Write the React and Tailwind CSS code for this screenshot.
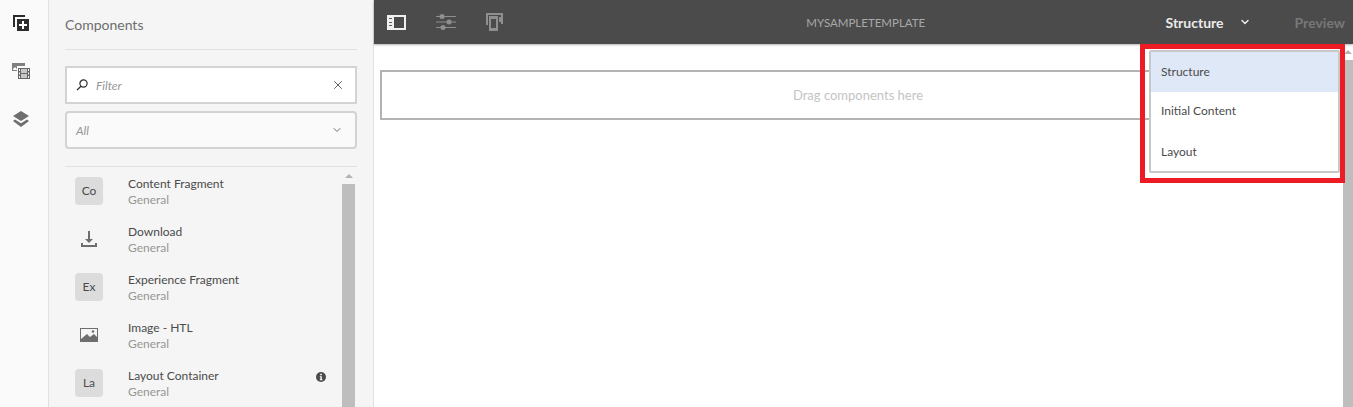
import { ChevronDown, X } from 'lucide-react'

const font = { fontFamily: 'Lato, "Noto Sans", sans-serif' }

function InsertIcon() {
  return (
    <svg width="16" height="16" viewBox="0 0 16 16">
      <path d="M0 0h12v2H2v10H0z" fill="#2c2c2c" />
      <path d="M4 4h12v12H4z" fill="#2c2c2c" />
      <path d="M9 6h2v3h3v2h-3v3H9v-3H6V9h3z" fill="#fff" />
    </svg>
  )
}

function AssetsIcon() {
  return (
    <svg width="18" height="16" viewBox="0 0 18 16">
      <path d="M0 0h13v3H5v5H0z" fill="#808080" />
      <path d="M1 6l2-2 2 2v1H1z" fill="#fff" />
      <path d="M6 5h12v11H6z" fill="#666666" />
      <path d="M9 6h6v4H9zM9 11h6v4H9z" fill="#c8c8c8" />
      <path d="M7 6h1v2H7zM7 9.500h1v2H7zM7 13h1v2H7zM16 6h1v2h-1zM16 9.500h1v2h-1zM16 13h1v2h-1z" fill="#fafafa" />
    </svg>
  )
}

function LayersIcon() {
  return (
    <svg width="16" height="17" viewBox="0 0 16 17">
      <path d="M8 0l8 5-8 5-8-5z" fill="#6e6e6e" />
      <path d="M2 8.500l6 3.800 6-3.800 2 1.500-8 6L0 10z" fill="#6e6e6e" />
    </svg>
  )
}

function TrayIcon() {
  return (
    <svg width="16" height="16" viewBox="0 0 16 16" fill="#6e6e6e">
      <path d="M7 0h2v8h3l-4 4-4-4h3z" />
      <path d="M0 12h2v2h12v-2h2v4H0z" />
    </svg>
  )
}

function ImageIcon() {
  return (
    <svg width="18" height="14" viewBox="0 0 18 14">
      <path d="M0 0h18v14H0z" fill="#6e6e6e" />
      <path d="M1 1h16v8l-3-3-4 3-3-3-6 5z" fill="#f5f5f5" />
      <circle cx="13" cy="3.500" r="1.200" fill="#6e6e6e" />
    </svg>
  )
}

function PanelIcon() {
  return (
    <svg width="19" height="15" viewBox="0 0 19 15">
      <path d="M0 0h19v15H0z" fill="#f0f0f0" />
      <path d="M7 2h10v11H7z" fill="#4b4b4b" />
      <path d="M2 3h3v1H2zM2 7h3v1H2zM2 10h3v1H2z" fill="#6b5560" />
    </svg>
  )
}

function SlidersIcon() {
  return (
    <svg width="20" height="16" viewBox="0 0 20 16" fill="#8f8f8f">
      <path d="M0 2h20v1H0zM0 7.500h20v1H0zM0 13h20v1H0z" />
      <circle cx="6" cy="2.500" r="2.500" />
      <circle cx="13" cy="8" r="2.500" />
      <circle cx="7" cy="13.500" r="2.500" />
    </svg>
  )
}

function DevicesIcon() {
  return (
    <svg width="18" height="18" viewBox="0 0 18 18">
      <path d="M0 0h17v11h-2V2H2v10H0z" fill="#8f8f8f" />
      <path d="M3 3h9v15H3z" fill="#8f8f8f" />
      <path d="M5 6h5v9H5z" fill="#4b4b4b" />
      <path d="M13 4h4v5h-4z" fill="#8f8f8f" />
    </svg>
  )
}

function LensIcon() {
  return (
    <svg width="12" height="12" viewBox="0 0 12 12" fill="none" stroke="#2c2c2c" strokeWidth="1.200">
      <circle cx="7.500" cy="4.500" r="3.600" />
      <path d="M5 7.200L1 11" />
    </svg>
  )
}

function InfoIcon() {
  return (
    <svg width="10" height="10" viewBox="0 0 10 10">
      <circle cx="5" cy="5" r="5" fill="#4b4b4b" />
      <path d="M4.200 1.800h1.600v1.500H4.200zM3.800 4.200h2v3h.6v1H3.800v-1h.6v-2h-.6z" fill="#fff" />
    </svg>
  )
}

const components = [
  { title: 'Content Fragment', badge: 'Co' },
  { title: 'Download', icon: <TrayIcon /> },
  { title: 'Experience Fragment', badge: 'Ex' },
  { title: 'Image - HTL', icon: <ImageIcon /> },
  { title: 'Layout Container', badge: 'La', info: true },
]

function ComponentRow({ item }) {
  return (
    <div className="flex h-12 shrink-0 items-start pl-[10px] pr-[16px]">
      <div className="flex h-7 w-7 shrink-0 items-center justify-center rounded-[4px] text-[12px] text-[#4b4b4b]">
        {item.badge
          ? <div className="flex h-7 w-7 items-center justify-center rounded-[4px] bg-[#dcdcdc]">{item.badge}</div>
          : item.icon}
      </div>
      <div className="ml-[25px] -mt-[1px] flex-1">
        <div className="text-[12px] leading-4 text-[#4b4b4b]">{item.title}</div>
        <div className="text-[12px] leading-4 text-[#969696]">General</div>
      </div>
      {item.info && <div className="mt-[3px]"><InfoIcon /></div>}
    </div>
  )
}

export default function App() {
  return (
    <div className="flex h-[407px] w-[1353px] overflow-hidden bg-white" style={font}>
      {/* Rail */}
      <div className="flex w-[49px] shrink-0 flex-col items-center gap-[32px] border-r border-[#e1e1e1] bg-[#fafafa] pr-[6px] pt-[15px]">
        <InsertIcon />
        <AssetsIcon />
        <LayersIcon />
      </div>

      {/* Components panel */}
      <div className="flex w-[325px] shrink-0 flex-col border-r border-[#e1e1e1] bg-[#f5f5f5] pl-[16px] pr-[16px]">
        <div className="flex h-[50px] shrink-0 items-center border-b border-[#e1e1e1] text-[14px] text-[#6e6e6e]">
          Components
        </div>
        <div className="mt-4 flex h-[38px] shrink-0 items-center border-2 border-[#d3d3d3] bg-white pl-[9px] pr-[10px]">
          <LensIcon />
          <span className="ml-[8px] flex-1 pt-[2px] text-[12px] italic text-[#969696]">Filter</span>
          <X size={14} strokeWidth={1.500} color="#4b4b4b" />
        </div>
        <div className="mt-[7px] flex h-[38px] shrink-0 items-center rounded-[4px] border-2 border-[#d3d3d3] bg-[#fafafa] pl-[9px] pr-[12px]">
          <span className="flex-1 pt-[2px] text-[12px] italic text-[#969696]">All</span>
          <ChevronDown size={12} strokeWidth={2} color="#6e6e6e" />
        </div>
        <div className="mt-[17px] flex flex-1 border-t border-[#e1e1e1] pt-[10px]">
          <div className="flex flex-1 flex-col">
            {components.map(c => <ComponentRow key={c.title} item={c} />)}
          </div>
          <div className="-mt-[10px] flex w-[13px] shrink-0 flex-col items-center mr-[2px]">
            <div className="mt-[7px] h-0 w-0 border-x-[4px] border-b-[4px] border-x-transparent border-b-[#b3b3b3]" />
            <div className="mt-[6px] w-full flex-1 bg-[#bebebe]" />
          </div>
        </div>
      </div>

      {/* Editor */}
      <div className="relative flex flex-1 flex-col">
        <div className="flex h-[44px] shrink-0 items-center bg-[#4b4b4b] pl-[13px] pr-[8px] shadow-[0_1px_2px_rgba(0,0,0,0.3)]">
          <PanelIcon />
          <div className="ml-[30px]"><SlidersIcon /></div>
          <div className="ml-[30px]"><DevicesIcon /></div>
          <div className="flex-1 pl-[62px] pt-[1px] text-center text-[11.5px] text-[#a8a8a8]">MYSAMPLETEMPLATE</div>
          <span className="text-[14px] font-bold text-[#eaeaea]">Structure</span>
          <ChevronDown className="ml-[15px]" size={12} strokeWidth={3} color="#eaeaea" />
          <span className="ml-[44px] text-[14px] font-bold text-[#787878]">Preview</span>
        </div>
        <div className="flex flex-1">
          <div className="flex-1 pl-[6px] pr-[7px] pt-[26px]">
            <div className="flex h-[50px] items-center justify-center border-2 border-[#b3b3b3] pt-[2px] text-[13px] text-[#c4c4c4]">
              Drag components here
            </div>
          </div>
          <div className="flex w-[10px] shrink-0 flex-col items-center">
            <div className="mt-[6px] h-0 w-0 border-x-[4px] border-b-[4px] border-x-transparent border-b-[#b3b3b3]" />
            <div className="mt-[6px] w-full flex-1 bg-[#bebebe]" />
          </div>
        </div>

        {/* Mode menu with the red callout round it */}
        <div className="absolute left-[766px] top-[44px] h-[139px] w-[205px] border-[5px] border-[#ed1c24] pl-[4px] pt-[1px]">
          <div className="flex h-[123px] w-[191px] flex-col rounded-[2px] border-2 border-[#c8c8c8] bg-white text-[12px] text-[#4b4b4b]">
            <div className="flex h-10 items-center bg-[#dfe8f6] pl-[10px]">Structure</div>
            <div className="flex h-10 items-center pl-[10px]">Initial Content</div>
            <div className="flex h-10 items-center pl-[10px] pt-[2px]">Layout</div>
          </div>
        </div>
      </div>
    </div>
  )
}
